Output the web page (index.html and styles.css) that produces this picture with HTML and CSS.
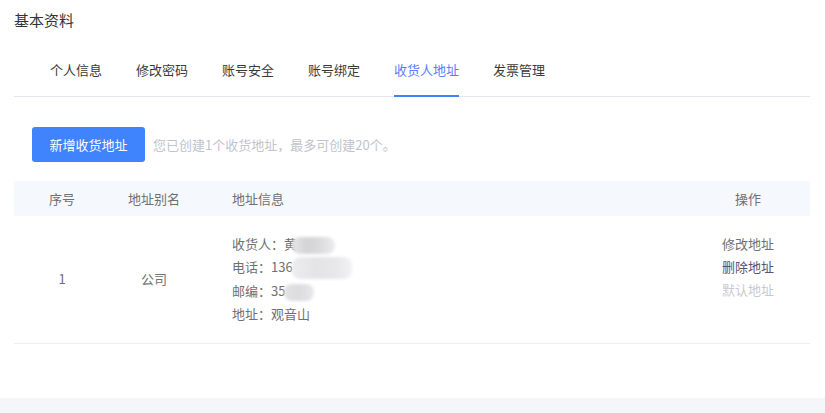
FILE: index.html
```html
<!DOCTYPE html>
<html lang="zh-CN">
<head>
  <meta charset="UTF-8">
  <title>基本资料 - 收货人地址</title>
  <link rel="stylesheet" href="styles.css">
</head>
<body>
  <div class="main">
    <h1 class="page-title">基本资料</h1>

    <!-- tabs -->
    <ul class="tabs">
      <li class="tab">个人信息</li>
      <li class="tab">修改密码</li>
      <li class="tab">账号安全</li>
      <li class="tab">账号绑定</li>
      <li class="tab active">收货人地址</li>
      <li class="tab">发票管理</li>
    </ul>

    <div class="toolbar">
      <button class="btn-primary">新增收货地址</button>
      <span class="hint">您已创建1个收货地址，最多可创建20个。</span>
    </div>

    <!-- address table -->
    <div class="addr-table">
      <div class="row head">
        <div class="col-no">序号</div>
        <div class="col-alias">地址别名</div>
        <div class="col-info">地址信息</div>
        <div class="col-ops">操作</div>
      </div>
      <div class="row body">
        <div class="col-no">1</div>
        <div class="col-alias">公司</div>
        <div class="col-info">
          <p>收货人：黄<span class="blur b1"></span></p>
          <p>电话：136<span class="blur b2"></span></p>
          <p>邮编：35<span class="blur b3"></span></p>
          <p>地址：观音山</p>
        </div>
        <div class="col-ops">
          <a class="op">修改地址</a>
          <a class="op del">删除地址</a>
          <a class="op muted">默认地址</a>
        </div>
      </div>
    </div>
  </div>
</body>
</html>
```

FILE: styles.css
```css
html, body {
  margin: 0;
  padding: 0;
}
body {
  font-family: "Noto Sans CJK SC", "Liberation Sans", sans-serif;
  background-color: #f5f6fa;
  color: #333;
}
.main {
  background: #fff;
  height: 398px;
  padding: 0 15px 0 14px;
  box-sizing: border-box;
}
.page-title {
  margin: 0;
  font-size: 15px;
  font-weight: normal;
  line-height: 40px;
  color: #333;
}

/* tabs */
.tabs {
  list-style: none;
  margin: 0;
  padding: 0 0 0 36px;
  display: flex;
  gap: 34px;
  height: 56px;
  border-bottom: 1px solid #e4e7ed;
}
.tab {
  font-size: 13px;
  line-height: 20px;
  padding: 20px 0 15px;
  margin-bottom: -1px;
  border-bottom: 2px solid transparent;
  color: #3a3a3a;
}
.tab.active {
  color: #5d7cf7;
  border-bottom-color: #3e84fd;
}

/* toolbar */
.toolbar {
  display: flex;
  align-items: center;
  gap: 8px;
  margin: 30px 0 0 18px;
}
.btn-primary {
  height: 35px;
  width: 113px;
  border: none;
  border-radius: 3px;
  background-color: #3f83fd;
  color: #fff;
  font-family: inherit;
  font-size: 13px;
  padding: 0;
}
.hint {
  font-size: 13px;
  color: #c0c4cc;
}

/* table */
.addr-table {
  margin-top: 19px;
  font-size: 13px;
  color: #707070;
}
.row {
  display: grid;
  grid-template-columns: 96px 88px 1fr 124px;
  align-items: center;
}
.row.head {
  height: 35px;
  background-color: #f5f8fc;
}
.row.body {
  padding: 16px 0 18px;
  border-bottom: 1px solid #ebeef5;
}
.col-no, .col-alias, .col-ops {
  text-align: center;
}
.col-info {
  padding-left: 34px;
}
.col-info p {
  margin: 0;
  line-height: 23px;
  white-space: nowrap;
}
.row.body .col-ops {
  align-self: start;
  display: flex;
  flex-direction: column;
  align-items: center;
}
.op {
  line-height: 23px;
  color: #707070;
}
.op.del {
  color: #5e4f6e;
}
.op.muted {
  color: #c8c9d0;
}

/* privacy blur */
.blur {
  display: inline-block;
  vertical-align: middle;
  border-radius: 8px;
  filter: blur(1.5px);
}
.b1 {
  width: 43px;
  height: 17px;
  margin-left: -5px;
  background: linear-gradient(90deg, #e6e6e8 0%, #d4d4d6 35%, #d9d9db 60%, #ececee 100%);
}
.b2 {
  width: 60px;
  height: 22px;
  margin-left: -1px;
  background: linear-gradient(90deg, #ededef 0%, #e4e4e6 40%, #e8e8ea 75%, #f2f2f4 100%);
}
.b3 {
  width: 30px;
  height: 17px;
  margin-left: -1px;
  background: linear-gradient(90deg, #e2e2e4 0%, #dcdcde 50%, #e8e8ea 100%);
}
```
